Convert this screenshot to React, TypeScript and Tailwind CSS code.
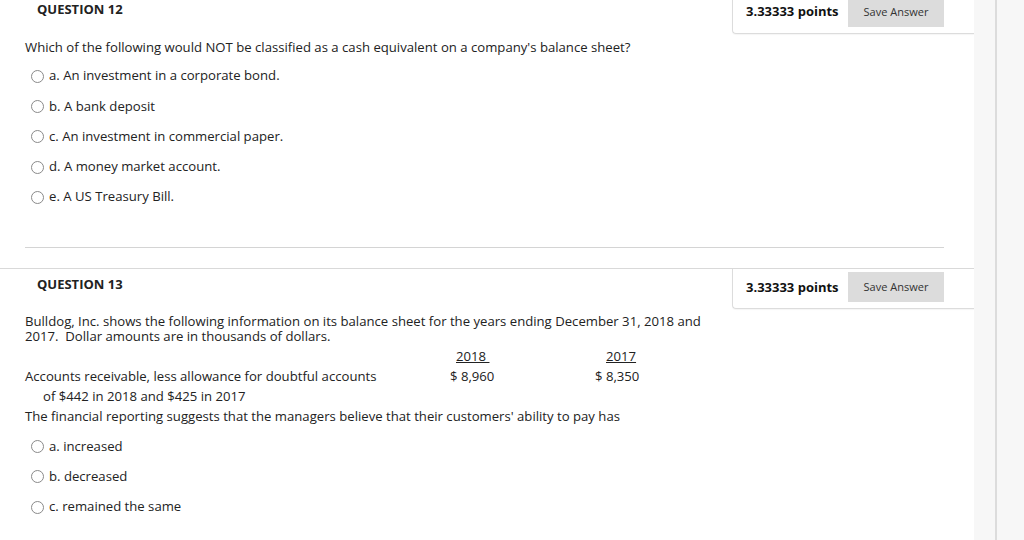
const font = { fontFamily: '"Open Sans", "Noto Sans", sans-serif' }

function Radio({ label }: { label: string }) {
  return (
    <div className="flex items-center h-[30.3px] pl-[31px]">
      <span className="w-[13px] h-[13px] rounded-full border border-[#8a8a8a] bg-white shrink-0" />
      <span className="ml-[5px] text-[13.15px] text-[#222]">{label}</span>
    </div>
  )
}

function Header({ title, first }: { title: string; first?: boolean }) {
  return (
    <div className={"flex " + (first ? "" : "border-t border-[#d9d9d9]")}>
      <div className="pl-[37px] pt-[5px] text-[13px] font-bold text-[#222] leading-[20px]">{title}</div>
      <div className="ml-auto w-[242px] flex items-center border-l border-b border-[#dcdcdc] rounded-bl-[4px] pl-[13px] pt-[3px] pb-[6px] shadow-[0_1px_1px_rgba(0,0,0,0.04)]">
        <span className="text-[13px] font-bold text-[#111]">3.33333 points</span>
        <button className="ml-auto mr-[30px] w-[96px] h-[30px] bg-[#dcdcdc] text-[11px] text-[#333]">
          Save Answer
        </button>
      </div>
    </div>
  )
}

export default function App() {
  return (
    <div className="flex w-[1024px] h-[540px] overflow-hidden bg-white" style={font}>
      <div className="w-[974px] shrink-0 mt-[-6px]">
        {/* Question 12 */}
        <Header title="QUESTION 12" first />
        <div className="pl-[25px] pt-[6px] text-[13.15px] text-[#222] leading-[15px]">
          Which of the following would NOT be classified as a cash equivalent on a company's balance sheet?
        </div>
        <div className="mt-[6px]">
          <Radio label="a. An investment in a corporate bond." />
          <Radio label="b. A bank deposit" />
          <Radio label="c. An investment in commercial paper." />
          <Radio label="d. A money market account." />
          <Radio label="e. A US Treasury Bill." />
        </div>
        <div className="ml-[25px] mr-[30px] mt-[35px] border-t border-[#d4d4d4]" />
        <div className="h-[20px]" />

        {/* Question 13 */}
        <Header title="QUESTION 13" />
        <div className="pl-[25px] pt-[5px] text-[13.15px] text-[#222] leading-[15px]">
          <div className="w-[690px]">
            Bulldog, Inc. shows the following information on its balance sheet for the years ending December 31, 2018 and 2017.&nbsp; Dollar amounts are in thousands of dollars.
          </div>
          <div className="mt-[2px] flex h-[20px] items-center">
            <span className="w-[431px]" />
            <span className="underline w-[150px]">2018&nbsp;</span>
            <span className="underline">2017</span>
          </div>
          <div className="flex h-[20px] items-center">
            <span className="w-[425px]">Accounts receivable, less allowance for doubtful accounts</span>
            <span className="w-[145px]">$ 8,960</span>
            <span>$ 8,350</span>
          </div>
          <div className="flex h-[20px] items-center pl-[18px]">of $442 in 2018 and $425 in 2017</div>
          <div className="flex h-[20px] items-center">
            The financial reporting suggests that the managers believe that their customers' ability to pay has
          </div>
        </div>
        <div className="mt-[5px]">
          <Radio label="a. increased" />
          <Radio label="b. decreased" />
          <Radio label="c. remained the same" />
        </div>
      </div>
      <div className="flex-1 bg-[#f7f7f7] flex">
        <div className="w-[21px]" />
        <div className="w-[2px] bg-[#dcdcdc]" />
      </div>
    </div>
  )
}
